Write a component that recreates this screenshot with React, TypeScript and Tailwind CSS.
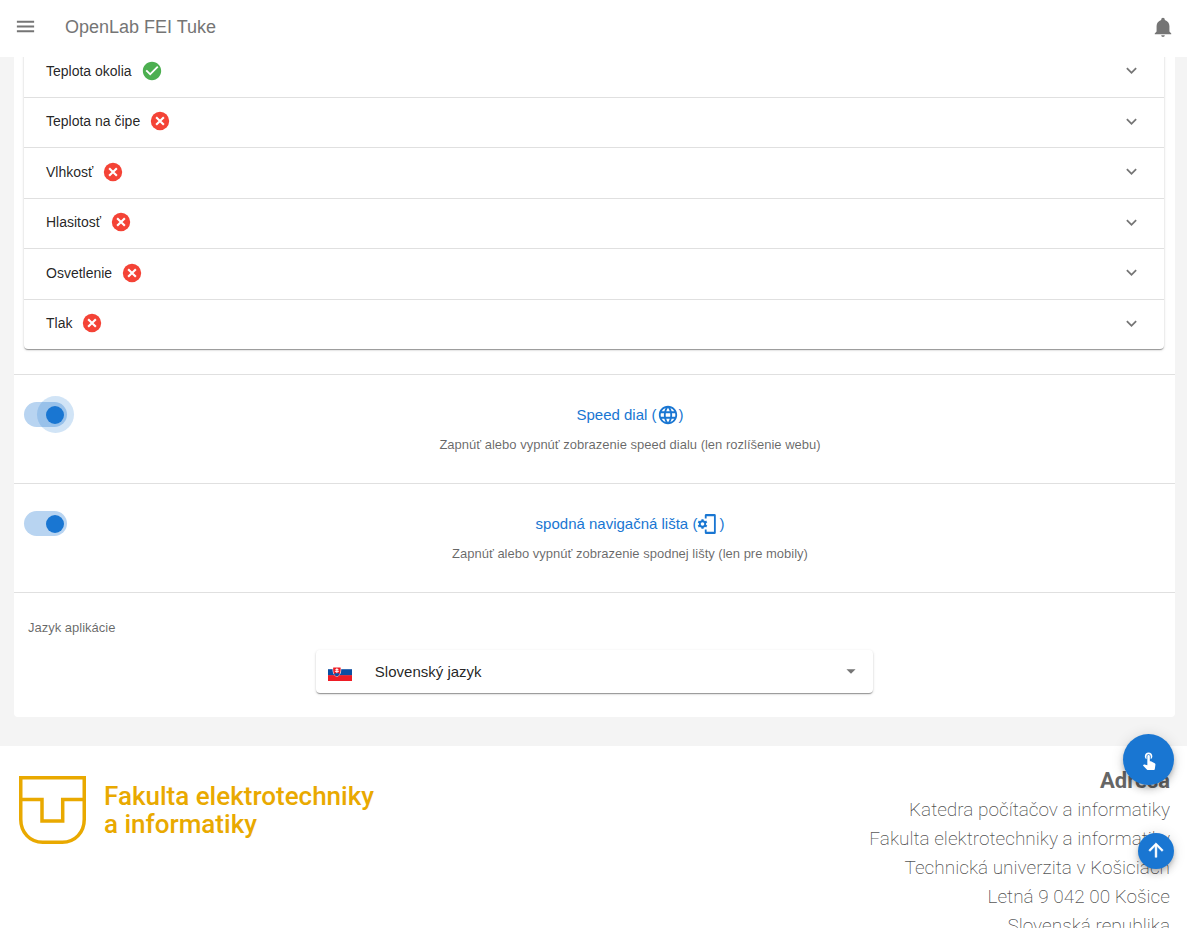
import { useState } from "react";
import type { ReactNode } from "react";
import {
  MdArrowDropDown,
  MdCheckCircle,
  MdExpandMore,
  MdLanguage,
  MdMenu,
  MdTouchApp,
} from "react-icons/md";

const sensors = [
  { name: "Teplota okolia", ok: true },
  { name: "Teplota na čipe", ok: false },
  { name: "Vlhkosť", ok: false },
  { name: "Hlasitosť", ok: false },
  { name: "Osvetlenie", ok: false },
  { name: "Tlak", ok: false },
];

const address = [
  "Katedra počítačov a informatiky",
  "Fakulta elektrotechniky a informatiky",
  "Technická univerzita v Košiciach",
  "Letná 9 042 00 Košice",
  "Slovenská republika",
];

function BellIcon() {
  return (
    <svg viewBox="0 0 24 24" className="size-[22px]" fill="currentColor" aria-hidden="true">
      <path d="M21 19v1H3v-1l2-2v-6c0-3.100 2.030-5.830 5-6.710V4a2 2 0 0 1 4 0v.29c2.970.88 5 3.610 5 6.710v6l2 2m-7 2a2 2 0 0 1-4 0" />
    </svg>
  );
}

function ErrorIcon() {
  return (
    <svg viewBox="0 0 24 24" className="ml-[9px] size-[22px] text-[#f44336]" aria-hidden="true">
      <circle cx="12" cy="12" r="10" fill="currentColor" />
      <path d="M7.800 7.800l8.400 8.400M16.200 7.800l-8.400 8.400" stroke="#fff" strokeWidth="2.300" />
    </svg>
  );
}

function PhoneSettingsIcon() {
  return (
    <svg viewBox="0 0 24 24" className="size-[22px]" aria-hidden="true">
      <path
        d="M10 1h9a1.500 1.500 0 0 1 1.500 1.500v19A1.500 1.500 0 0 1 19 23h-9a1.500 1.500 0 0 1-1.500-1.500V18h2v2.500h8v-17h-8V6h-2V2.500A1.500 1.500 0 0 1 10 1z"
        fill="currentColor"
      />
      <circle cx="6" cy="12" r="3" fill="none" stroke="currentColor" strokeWidth="2" />
      <path
        d="M6 6.700v2.300M6 15v2.300M1.400 9.350l2 1.150M8.600 13.500l2 1.150M1.400 14.650l2-1.150M8.600 10.500l2-1.150"
        stroke="currentColor"
        strokeWidth="2.400"
      />
    </svg>
  );
}

function ArrowUpIcon() {
  return (
    <svg viewBox="0 0 24 24" className="mb-[2px] size-[22px]" fill="currentColor" aria-hidden="true">
      <path d="M13 20h-2V8l-5.500 5.500-1.420-1.420L12 4.160l7.920 7.920-1.420 1.420L13 8v12z" stroke="currentColor" strokeWidth=".5" />
    </svg>
  );
}

function Header() {
  return (
    <header className="relative z-10 flex h-[57px] shrink-0 items-center bg-white pb-1 pl-[14px] pr-[13px] text-[#757575]">
      <button type="button" aria-label="Menu">
        <MdMenu className="size-[23px]" />
      </button>
      <h1 className="ml-7 text-lg">OpenLab FEI Tuke</h1>
      <button type="button" aria-label="Upozornenia" className="ml-auto">
        <BellIcon />
      </button>
    </header>
  );
}

function SensorRow({ name, ok }: { name: string; ok: boolean }) {
  return (
    <button
      type="button"
      className="flex w-full flex-1 items-center border-b border-[#e0e0e0] pb-[2px] pl-[22px] pr-[22px] text-left text-sm text-black/87 last:border-b-0"
    >
      {name}
      {ok ? <MdCheckCircle className="ml-[9px] size-[22px] text-[#4caf50]" /> : <ErrorIcon />}
      <MdExpandMore className="ml-auto size-[21px] text-[#757575]" />
    </button>
  );
}

type SettingProps = {
  id: string;
  title: string;
  icon: ReactNode;
  hint: string;
  focused?: boolean;
};

function Setting({ id, title, icon, hint, focused = false }: SettingProps) {
  const [on, setOn] = useState(true);
  return (
    <section className="flex h-[109px] items-start border-t border-[#e0e0e0] pl-[10px] pr-[10px] pt-[27px]">
      <span className="relative flex h-[25px] w-[43px] items-center rounded-full bg-[#b8d4f1]">
        <input
          id={id}
          type="checkbox"
          role="switch"
          checked={on}
          onChange={(e) => setOn(e.target.checked)}
          className="peer absolute inset-0 z-10 m-0 cursor-pointer opacity-0"
        />
        {focused && (
          <span className="absolute -right-[7px] -top-[6px] size-[37px] rounded-full bg-[#1976d2]/20" />
        )}
        <span className="relative ml-1 size-[18px] rounded-full bg-[#1976d2] peer-checked:ml-[22px]" />
      </span>
      <div className="ml-7 flex-1 text-center">
        <label htmlFor={id} className="flex h-[26px] items-center justify-center text-[15px] text-[#1976d2]">
          {title} ({icon})
        </label>
        <p className="mt-[7px] text-[13px] leading-5 text-black/60">{hint}</p>
      </div>
    </section>
  );
}

function SlovakFlag() {
  return (
    <svg viewBox="0 0 24 16" className="pointer-events-none absolute left-3 top-[15px] h-4 w-6" aria-hidden="true">
      <rect width="24" height="5.400" fill="#fff" />
      <rect y="4.200" width="24" height="6.400" fill="#0b4ea2" />
      <rect y="10.200" width="24" height="5.800" fill="#ee1c25" />
      <path d="M4.700 2h8.400c.4 5.200-.3 8-4.200 10C5 10 4.300 7.200 4.700 2z" fill="#fff" />
      <path d="M5.200 2.400h7.400c.3 4.600-.4 7.200-3.700 9-3.300-1.800-4-4.400-3.700-9z" fill="#ee1c25" />
      <path d="M6 8.900c.9-.8 1.800-.6 2.900-1.100 1.100.5 2 .3 2.900 1.100-.6 1.100-1.600 1.900-2.900 2.500-1.300-.6-2.300-1.400-2.900-2.500z" fill="#0b4ea2" />
      <path d="M8.900 3.200v5M7.400 4.600h3M6.900 6.300h4" stroke="#fff" strokeWidth="1" />
    </svg>
  );
}

function LanguageSetting() {
  return (
    <section className="border-t border-[#e0e0e0] pb-6 pt-[25px]">
      <label htmlFor="language" className="ml-[14px] block text-[13px] leading-5 text-black/60">
        Jazyk aplikácie
      </label>
      <div className="relative mx-auto mt-3 w-[48%] rounded shadow-[0_2px_1px_-1px_rgba(0,0,0,0.2),0_1px_1px_rgba(0,0,0,0.18),0_1px_3px_rgba(0,0,0,0.16)]">
        <SlovakFlag />
        <select
          id="language"
          className="block h-[43px] w-full appearance-none rounded bg-transparent pl-[59px] pr-10 pt-px text-[15px] text-black/87"
        >
          <option>Slovenský jazyk</option>
        </select>
        <MdArrowDropDown className="pointer-events-none absolute right-[11px] top-[10px] size-[22px] text-[#757575]" />
      </div>
    </section>
  );
}

function Footer() {
  return (
    <footer className="mt-[29px] flex justify-between bg-white pb-8 pl-[19px] pr-[17px] pt-[21px]">
      <a href="#fei" className="mt-[9px] flex items-start text-[#e9a900]">
        <svg viewBox="0 0 67 68" className="h-[68px] w-[67px]" fill="none" stroke="currentColor" strokeWidth="3.500" aria-hidden="true">
          <path d="M1.750 1.750h63.500v41.500c0 13-9 23-22 23H23.750c-13 0-22-10-22-23z" />
          <path d="M1.750 23.500H23V45h20.700V23.500h21.500" />
        </svg>
        <span className="ml-[18px] mt-[6px] font-['Roboto',sans-serif] text-[26px] font-medium leading-7">
          Fakulta elektrotechniky
          <br />a informatiky
        </span>
      </a>
      <address className="text-right font-['Roboto',sans-serif] text-[19px] font-extralight not-italic leading-[29px] text-black/70">
        <strong className="block text-[22px] font-bold leading-7 text-[#666]">Adresa</strong>
        {address.map((line) => (
          <span key={line} className="block">
            {line}
          </span>
        ))}
      </address>
    </footer>
  );
}

export default function App() {
  return (
    <div className="flex h-screen flex-col overflow-hidden bg-[#f4f4f4] font-['Liberation_Sans',Arial,sans-serif]">
      <Header />
      <main className="-mt-[10px]">
        <div className="ml-[14px] mr-3 rounded-b bg-white">
          <div className="pb-[25px] pl-[10px] pr-[11px]">
            <div className="flex h-[302px] flex-col rounded-b shadow-[0_2px_1px_-1px_rgba(0,0,0,0.2),0_1px_1px_rgba(0,0,0,0.18),0_1px_3px_rgba(0,0,0,0.16)]">
              {sensors.map((sensor) => (
                <SensorRow key={sensor.name} {...sensor} />
              ))}
            </div>
          </div>
          <Setting
            id="speed-dial"
            title="Speed dial"
            icon={<MdLanguage className="size-[22px]" />}
            hint="Zapnúť alebo vypnúť zobrazenie speed dialu (len rozlíšenie webu)"
            focused
          />
          <Setting
            id="bottom-nav"
            title="spodná navigačná lišta"
            icon={<PhoneSettingsIcon />}
            hint="Zapnúť alebo vypnúť zobrazenie spodnej lišty (len pre mobily)"
          />
          <LanguageSetting />
        </div>
        <Footer />
      </main>
      <button
        type="button"
        aria-label="Rýchle akcie"
        className="fixed bottom-[143px] right-[13px] z-20 flex size-[51px] items-center justify-center rounded-full bg-[#1976d2] text-white shadow-[0_3px_5px_-1px_rgba(0,0,0,0.2),0_5px_9px_rgba(0,0,0,0.14),0_1px_14px_rgba(0,0,0,0.12)]"
      >
        <MdTouchApp className="size-5" />
      </button>
      <button
        type="button"
        aria-label="Späť hore"
        className="fixed bottom-[59px] right-[13px] z-20 flex size-9 items-center justify-center rounded-full bg-[#1976d2] text-white shadow-[0_3px_5px_-1px_rgba(0,0,0,0.2),0_5px_9px_rgba(0,0,0,0.14),0_1px_14px_rgba(0,0,0,0.12)]"
      >
        <ArrowUpIcon />
      </button>
    </div>
  );
}
